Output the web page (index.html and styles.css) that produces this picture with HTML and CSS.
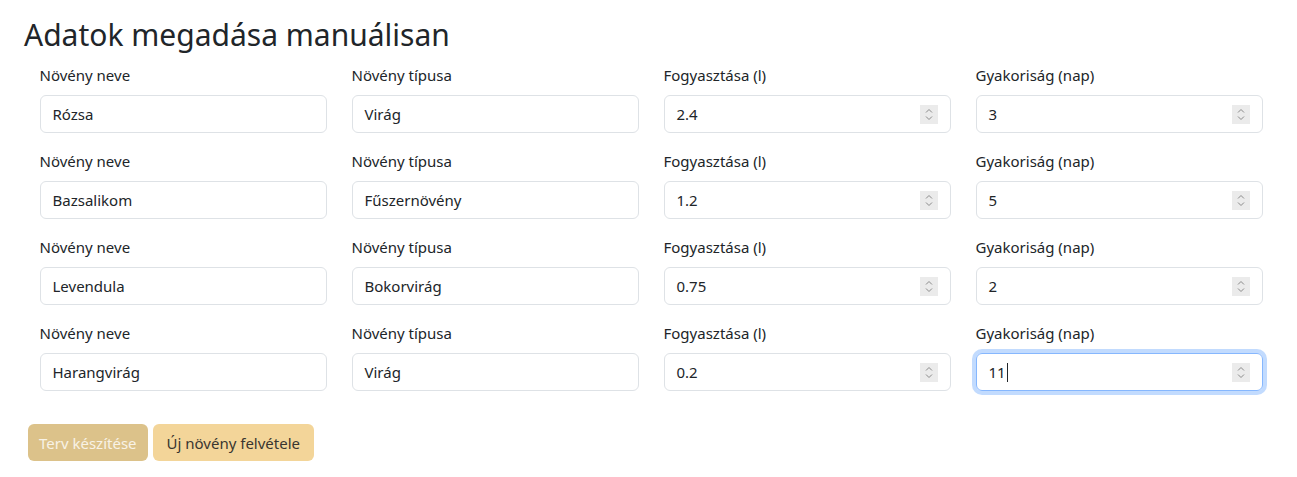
FILE: index.html
```html
<!DOCTYPE html>
<html lang="hu">
<head>
<meta charset="utf-8">
<title>Adatok megadása manuálisan</title>
<link rel="stylesheet" href="styles.css">
</head>
<body>
<div class="page">
  <h2 class="title">Adatok megadása manuálisan</h2>
  <div class="container">
    <div class="grid">
      <div class="field"><label>Növény neve</label><div class="input">Rózsa</div></div>
      <div class="field"><label>Növény típusa</label><div class="input">Virág</div></div>
      <div class="field"><label>Fogyasztása (l)</label><div class="input num">2.4<span class="spin"><svg viewBox="0 0 18 19" width="18" height="19"><path d="M6 7.5l3-3 3 3M6 11.5l3 3 3-3" fill="none" stroke="#8a8a8a" stroke-width="1"/></svg></span></div></div>
      <div class="field"><label>Gyakoriság (nap)</label><div class="input num">3<span class="spin"><svg viewBox="0 0 18 19" width="18" height="19"><path d="M6 7.5l3-3 3 3M6 11.5l3 3 3-3" fill="none" stroke="#8a8a8a" stroke-width="1"/></svg></span></div></div>

      <div class="field"><label>Növény neve</label><div class="input">Bazsalikom</div></div>
      <div class="field"><label>Növény típusa</label><div class="input">Fűszernövény</div></div>
      <div class="field"><label>Fogyasztása (l)</label><div class="input num">1.2<span class="spin"><svg viewBox="0 0 18 19" width="18" height="19"><path d="M6 7.5l3-3 3 3M6 11.5l3 3 3-3" fill="none" stroke="#8a8a8a" stroke-width="1"/></svg></span></div></div>
      <div class="field"><label>Gyakoriság (nap)</label><div class="input num">5<span class="spin"><svg viewBox="0 0 18 19" width="18" height="19"><path d="M6 7.5l3-3 3 3M6 11.5l3 3 3-3" fill="none" stroke="#8a8a8a" stroke-width="1"/></svg></span></div></div>

      <div class="field"><label>Növény neve</label><div class="input">Levendula</div></div>
      <div class="field"><label>Növény típusa</label><div class="input">Bokorvirág</div></div>
      <div class="field"><label>Fogyasztása (l)</label><div class="input num">0.75<span class="spin"><svg viewBox="0 0 18 19" width="18" height="19"><path d="M6 7.5l3-3 3 3M6 11.5l3 3 3-3" fill="none" stroke="#8a8a8a" stroke-width="1"/></svg></span></div></div>
      <div class="field"><label>Gyakoriság (nap)</label><div class="input num">2<span class="spin"><svg viewBox="0 0 18 19" width="18" height="19"><path d="M6 7.5l3-3 3 3M6 11.5l3 3 3-3" fill="none" stroke="#8a8a8a" stroke-width="1"/></svg></span></div></div>

      <div class="field"><label>Növény neve</label><div class="input">Harangvirág</div></div>
      <div class="field"><label>Növény típusa</label><div class="input">Virág</div></div>
      <div class="field"><label>Fogyasztása (l)</label><div class="input num">0.2<span class="spin"><svg viewBox="0 0 18 19" width="18" height="19"><path d="M6 7.5l3-3 3 3M6 11.5l3 3 3-3" fill="none" stroke="#8a8a8a" stroke-width="1"/></svg></span></div></div>
      <div class="field"><label>Gyakoriság (nap)</label><div class="input num focus">11<span class="caret"></span><span class="spin"><svg viewBox="0 0 18 19" width="18" height="19"><path d="M6 7.5l3-3 3 3M6 11.5l3 3 3-3" fill="none" stroke="#8a8a8a" stroke-width="1"/></svg></span></div></div>
    </div>
    <div class="actions">
      <button class="btn btn-disabled">Terv készítése</button>
      <button class="btn btn-add">Új növény felvétele</button>
    </div>
  </div>
</div>
</body>
</html>
```
FILE: styles.css
```css
* { box-sizing: border-box; }
html, body { margin: 0; padding: 0; background: #fff; }
body {
  font-family: "Segoe UI", "Noto Sans", sans-serif;
  font-size: 15px;
  color: #212529;
}
.page { padding: 16px 0 0 24px; }
.title {
  margin: 0 0 9px 0;
  font-size: 30px;
  font-weight: 400;
  line-height: 38px;
  color: #212529;
}
.container { width: 1248px; margin-left: 3px; }
.grid {
  display: grid;
  grid-template-columns: repeat(4, 312px);
  row-gap: 16px;
}
.field { padding: 0 12.5px; }
.field label {
  display: block;
  height: 24px;
  line-height: 24px;
  margin-bottom: 8px;
}
.input {
  height: 38px;
  border: 1px solid #dee2e6;
  border-radius: 6px;
  padding: 0 12px;
  display: flex;
  align-items: center;
  position: relative;
}
.spin {
  position: absolute;
  right: 12px;
  top: 9px;
  width: 18px;
  height: 19px;
  background: #ebebeb;
  display: block;
}
.spin svg { display: block; }
.input.focus {
  border-color: #86b7fe;
  box-shadow: 0 0 0 4px rgba(13, 110, 253, 0.25);
}
.caret {
  display: inline-block;
  width: 1px;
  height: 19px;
  background: #212529;
  margin-left: 1px;
}
.actions {
  display: flex;
  gap: 5px;
  margin-top: 33px;
  margin-left: 1px;
}
.btn {
  font-family: inherit;
  font-size: 15px;
  height: 37px;
  padding: 0 10px;
  border-radius: 6px;
  border: 1px solid transparent;
}
.btn-disabled { background: #dcc28a; color: #f8f2e6; }
.btn-add { background: #f3d599; color: #3a3630; padding: 0 13px; }
```
